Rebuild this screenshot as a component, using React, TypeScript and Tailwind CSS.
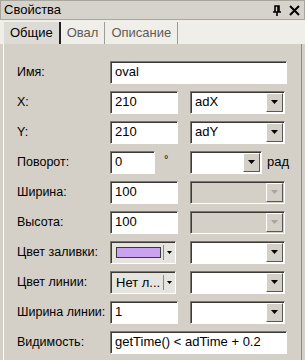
import React from "react";

const font = { fontFamily: '"Liberation Sans", Arial, sans-serif' };

function Sunken({
  className = "",
  children,
  disabled = false
}: {
  className?: string;
  children?: React.ReactNode;
  disabled?: boolean;
}) {
  return (
    <div
      className={`flex h-[23px] items-center border border-t-[#7b7870] border-l-[#7b7870] border-b-white border-r-white shadow-[inset_1px_1px_0_#3c3a36] ${
        disabled ? "bg-[#d4d0c8]" : "bg-white"
      } ${className}`}
    >
      {children}
    </div>
  );
}

function Arrow({ disabled = false }: { disabled?: boolean }) {
  return (
    <div className="mr-[1px] flex h-[19px] w-[17px] items-center justify-center border border-t-white border-l-white border-b-[#5a5852] border-r-[#5a5852] bg-[#d4d0c8]">
      <svg width="7" height="4" viewBox="0 0 7 4">
        <path d="M0 0h7L3.5 4z" fill={disabled ? "#a8a59e" : "#000"} />
      </svg>
    </div>
  );
}

function TextBox({ value, className }: { value: string; className: string }) {
  return (
    <Sunken className={className}>
      <span className="pl-[4px] text-[13px] text-black">{value}</span>
    </Sunken>
  );
}

function Combo({
  value = "",
  className = "w-[95px]",
  disabled = false
}: {
  value?: string;
  className?: string;
  disabled?: boolean;
}) {
  return (
    <Sunken className={`justify-between ${className}`} disabled={disabled}>
      <span className="pl-[4px] text-[13px] text-black">{value}</span>
      <Arrow disabled={disabled} />
    </Sunken>
  );
}

function ColorButton({ children }: { children: React.ReactNode }) {
  return (
    <div className="flex h-[23px] w-[66px] items-center border border-t-[#7b7870] border-l-[#7b7870] border-b-white border-r-white bg-[#e6e4de] shadow-[inset_1px_1px_0_#3c3a36]">
      <div className="flex w-[52px] items-center pl-[5px]">{children}</div>
      <div className="h-[15px] w-px bg-[#8a877f]" />
      <svg className="ml-[3px]" width="5" height="3" viewBox="0 0 5 3">
        <path d="M0 0h5L2.5 3z" fill="#000" />
      </svg>
    </div>
  );
}

type Row = { label: string; left: React.ReactNode; right?: React.ReactNode };

export default function App() {
  const rows: Row[] = [
    { label: "Имя:", left: <TextBox value="oval" className="w-[177px]" /> },
    {
      label: "X:",
      left: <TextBox value="210" className="w-[68px]" />,
      right: <Combo value="adX" />
    },
    {
      label: "Y:",
      left: <TextBox value="210" className="w-[68px]" />,
      right: <Combo value="adY" />
    },
    {
      label: "Поворот:",
      left: (
        <div className="flex w-[79px] items-center">
          <TextBox value="0" className="w-[45px]" />
          <span className="ml-[9px] mb-[6px] text-[11px] text-black">°</span>
        </div>
      ),
      right: (
        <div className="flex items-center">
          <Combo className="w-[72px]" />
          <span className="ml-[5px] text-[13px] text-black">рад</span>
        </div>
      )
    },
    {
      label: "Ширина:",
      left: <TextBox value="100" className="w-[68px]" />,
      right: <Combo disabled />
    },
    {
      label: "Высота:",
      left: <TextBox value="100" className="w-[68px]" />,
      right: <Combo disabled />
    },
    {
      label: "Цвет заливки:",
      left: (
        <ColorButton>
          <div className="h-[11px] w-[45px] border border-[#3a3a3a] bg-[#c9a2f2]" />
        </ColorButton>
      ),
      right: <Combo />
    },
    {
      label: "Цвет линии:",
      left: (
        <ColorButton>
          <span className="text-[13px] leading-none text-black">Нет л...</span>
        </ColorButton>
      ),
      right: <Combo />
    },
    {
      label: "Ширина линии:",
      left: <TextBox value="1" className="w-[68px]" />,
      right: <Combo />
    },
    {
      label: "Видимость:",
      left: <TextBox value="getTime() < adTime + 0.2" className="w-[177px]" />
    }
  ];

  return (
    <div className="h-[360px] w-[305px] overflow-hidden bg-[#d4d0c8]" style={font}>
      <div className="flex h-[20px] items-center justify-between border border-[#a9a69e] bg-[#d6d3cc] pl-[3px] pr-[4px]">
        <span className="text-[13px] text-black">Свойства</span>
        <div className="flex items-center gap-[7px]">
          <svg width="10" height="11" viewBox="0 0 10 11">
            <path d="M3 1h4v6H3z M1 7h8 M5 7v4" stroke="#000" strokeWidth="1.6" fill="none" />
            <path d="M6 1v6" stroke="#000" strokeWidth="1.6" />
          </svg>
          <svg width="11" height="11" viewBox="0 0 11 11">
            <path d="M1 1l9 9M10 1l-9 9" stroke="#000" strokeWidth="2" />
          </svg>
        </div>
      </div>

      <div className="flex h-[24px] items-stretch bg-[#efeee9] pl-[4px] pt-[2px]">
        <div className="flex items-center border-r-2 border-r-[#222] bg-[#dddbd5] pl-[6px] pr-[6px] text-[13px] text-black">
          Общие
        </div>
        <div className="flex items-center border-r border-r-[#9c9a94] px-[6px] text-[13px] text-[#5e5c58]">
          Овал
        </div>
        <div className="flex items-center border-r border-r-[#9c9a94] px-[6px] text-[13px] text-[#5e5c58]">
          Описание
        </div>
      </div>

      <div className="mx-[3px] h-full border-l border-r border-l-white border-r-[#8e8b84] bg-[#d4d0c8] pt-[13px]">
        {rows.map((row) => (
          <div key={row.label} className="flex h-[30px] items-center">
            <div className="w-[106px] pl-[13px] text-[12.5px] text-black">{row.label}</div>
            <div className="w-[80px]">{row.left}</div>
            {row.right ? <div>{row.right}</div> : null}
          </div>
        ))}
      </div>
    </div>
  );
}
